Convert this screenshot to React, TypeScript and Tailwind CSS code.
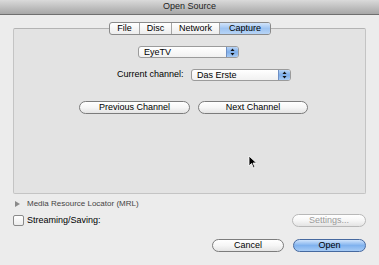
import React from "react";

const font = { fontFamily: '"Liberation Sans", Arial, sans-serif' };

function Popup({ label, width }: { label: string; width: string }) {
  return (
    <div className={`flex h-[12px] ${width} items-stretch overflow-hidden rounded-[3px] border border-[#9b9b9b] bg-gradient-to-b from-white to-[#f1f1f1]`}>
      <span className="flex-1 pl-[5px] text-[9px] leading-[11px] text-black">{label}</span>
      <span className="flex w-[12px] items-center justify-center border-l border-[#6e8fc4] bg-gradient-to-b from-[#b9d4f5] via-[#7eaeea] to-[#a9cbf3]">
        <svg width="5" height="8" viewBox="0 0 5 8">
          <path d="M2.5 0.5 L4.5 3 L0.5 3 Z" fill="#111" />
          <path d="M2.5 7.5 L4.5 5 L0.5 5 Z" fill="#111" />
        </svg>
      </span>
    </div>
  );
}

function PillButton({ label, width, disabled }: { label: string; width: string; disabled?: boolean }) {
  return (
    <div
      className={`flex h-[13px] ${width} items-center justify-center rounded-full border ${disabled ? "border-[#b8b8b8] text-[#9a9a9a]" : "border-[#7c7c7c] text-black"} bg-gradient-to-b from-white via-[#f6f6f6] to-[#e4e4e4] text-[9px] leading-none`}
    >
      {label}
    </div>
  );
}

export default function App() {
  const tabs = [
    { name: "File", w: "w-[29px]" },
    { name: "Disc", w: "w-[32px]" },
    { name: "Network", w: "w-[48px]" },
    { name: "Capture", w: "w-[51px]" },
  ];

  return (
    <div style={font} className="relative h-[265px] w-[379px] overflow-hidden bg-[#ececec] text-black">
      {/* title bar */}
      <div className="flex h-[15px] items-center justify-center border-b border-[#6f6f6f] bg-gradient-to-b from-[#dadada] to-[#a7a7a7] text-[9px] text-[#222]">
        Open Source
      </div>

      {/* tabs */}
      <div className="relative z-10 mt-[7px] flex justify-center pl-[1px]">
        <div className="flex h-[13px] overflow-hidden rounded-[3px] border border-[#8a8a8a] bg-gradient-to-b from-white to-[#ededed]">
          {tabs.map((t, i) => (
            <div
              key={t.name}
              className={`flex ${t.w} items-center justify-center text-[9px] leading-none ${i > 0 ? "border-l border-[#a5a5a5]" : ""} ${t.name === "Capture" ? "bg-gradient-to-b from-[#d2e4fa] via-[#9fc4f1] to-[#b7d4f6]" : ""}`}
            >
              {t.name}
            </div>
          ))}
        </div>
      </div>

      {/* panel */}
      <div className="mx-[13px] -mt-[7px] h-[166px] rounded-[2px] border border-[#c4c4c4] border-t-[#b3b3b3] bg-[#e3e3e3] pt-[17px]">
        <div className="ml-[124px]">
          <Popup label="EyeTV" width="w-[101px]" />
        </div>
        <div className="mt-[10px] flex items-center pl-[103px]">
          <span className="w-[74px] text-[9px]">Current channel:</span>
          <Popup label="Das Erste" width="w-[100px]" />
        </div>
        <div className="mt-[19px] flex gap-[8px] pl-[65px]">
          <PillButton label="Previous Channel" width="w-[111px]" />
          <PillButton label="Next Channel" width="w-[110px]" />
        </div>
      </div>

      {/* MRL disclosure */}
      <div className="mt-[5px] flex h-[10px] items-center pl-[15px] text-[8px] text-[#444]">
        <svg width="5" height="6" viewBox="0 0 5 6" className="mr-[7px]">
          <path d="M0 0 L5 3 L0 6 Z" fill="#8a8a8a" />
        </svg>
        Media Resource Locator (MRL)
      </div>

      {/* streaming row */}
      <div className="mt-[5px] flex items-center pl-[13px] pr-[13px]">
        <span className="h-[11px] w-[11px] rounded-[2px] border border-[#8a8a8a] bg-gradient-to-b from-white to-[#ececec]" />
        <span className="ml-[3px] flex-1 text-[9px]">Streaming/Saving:</span>
        <PillButton label="Settings..." width="w-[74px]" disabled />
      </div>

      {/* bottom buttons */}
      <div className="mt-[11px] flex justify-end gap-[9px] pr-[13px]">
        <PillButton label="Cancel" width="w-[72px]" />
        <div className="flex h-[13px] w-[73px] items-center justify-center rounded-full border border-[#46699f] bg-gradient-to-b from-[#cfe3fb] via-[#80b2ee] to-[#a6cbf5] text-[9px] leading-none">
          Open
        </div>
      </div>

      {/* mouse cursor */}
      <svg width="10" height="14" viewBox="0 0 10 14" className="absolute left-[248px] top-[155px]">
        <path d="M1 1 L1 11 L3.5 8.5 L5.5 13 L7 12.3 L5 8 L8.5 8 Z" fill="#000" stroke="#fff" strokeWidth="0.8" />
      </svg>
    </div>
  );
}
